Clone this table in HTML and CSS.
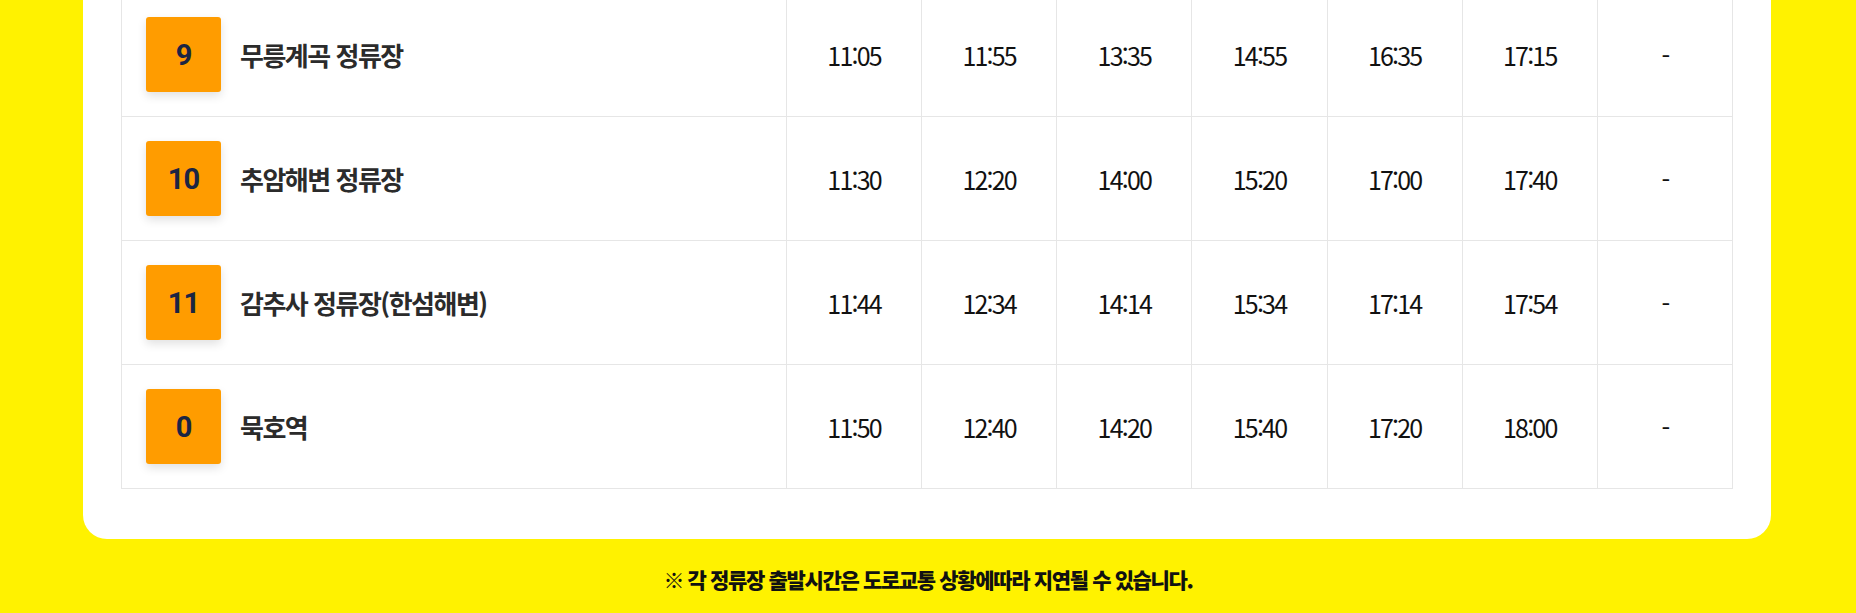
FILE: index.html
```html
<!DOCTYPE html>
<html lang="ko">
<head>
<meta charset="utf-8">
<title>시간표</title>
<link rel="stylesheet" href="styles.css">
</head>
<body>
<div class="card">
  <table class="timetable">
    <colgroup>
      <col class="c-stop">
      <col class="c-time"><col class="c-time"><col class="c-time"><col class="c-time"><col class="c-time"><col class="c-time"><col class="c-time">
    </colgroup>
    <tbody>
      <tr>
        <td class="stop"><div class="stop-inner"><span class="badge">9</span><span class="name">무릉계곡 정류장</span></div></td>
        <td>11:05</td><td>11:55</td><td>13:35</td><td>14:55</td><td>16:35</td><td>17:15</td><td>-</td>
      </tr>
      <tr>
        <td class="stop"><div class="stop-inner"><span class="badge">10</span><span class="name">추암해변 정류장</span></div></td>
        <td>11:30</td><td>12:20</td><td>14:00</td><td>15:20</td><td>17:00</td><td>17:40</td><td>-</td>
      </tr>
      <tr>
        <td class="stop"><div class="stop-inner"><span class="badge">11</span><span class="name">감추사 정류장(한섬해변)</span></div></td>
        <td>11:44</td><td>12:34</td><td>14:14</td><td>15:34</td><td>17:14</td><td>17:54</td><td>-</td>
      </tr>
      <tr>
        <td class="stop"><div class="stop-inner"><span class="badge">0</span><span class="name">묵호역</span></div></td>
        <td>11:50</td><td>12:40</td><td>14:20</td><td>15:40</td><td>17:20</td><td>18:00</td><td>-</td>
      </tr>
    </tbody>
  </table>
</div>
<p class="notice">※ 각 정류장 출발시간은 도로교통 상황에따라 지연될 수 있습니다.</p>
</body>
</html>
```

FILE: styles.css
```css
html, body {
  margin: 0;
  padding: 0;
}
body {
  background: #fff200;
  font-family: "Noto Sans CJK KR", "Noto Sans", sans-serif;
  color: #111;
}
.card {
  margin: -48px 85px 0 83px;
  padding: 40px 38px 50px 38px;
  background: #fff;
  border-radius: 24px;
}
.timetable {
  width: 100%;
  border-collapse: collapse;
  table-layout: fixed;
  border: 1px solid #e6e6e6;
}
.c-stop { width: 665px; }
.timetable td {
  height: 124px;
  padding: 0;
  box-sizing: border-box;
  border: 1px solid #e6e6e6;
  text-align: center;
  vertical-align: middle;
  font-size: 25px;
  font-weight: 400;
  letter-spacing: -1.8px;
  color: #111;
}
.timetable td.stop {
  text-align: left;
  padding-left: 24px;
}
.stop-inner {
  display: flex;
  align-items: center;
  gap: 19px;
}
.badge {
  display: flex;
  align-items: center;
  justify-content: center;
  width: 75px;
  height: 75px;
  background: #ff9c00;
  border-radius: 3px;
  box-shadow: 0 4px 10px rgba(0, 0, 0, 0.12);
  font-family: Roboto, "Noto Sans", sans-serif;
  font-weight: 700;
  font-size: 29px;
  letter-spacing: -1px;
  color: #1b2543;
}
.name {
  font-size: 26px;
  font-weight: 700;
  letter-spacing: -1.5px;
  color: #2b2b2b;
}
.notice {
  margin: 25px 0 0;
  text-align: center;
  font-size: 21px;
  font-weight: 900;
  letter-spacing: -1.35px;
  color: #111;
}
```
